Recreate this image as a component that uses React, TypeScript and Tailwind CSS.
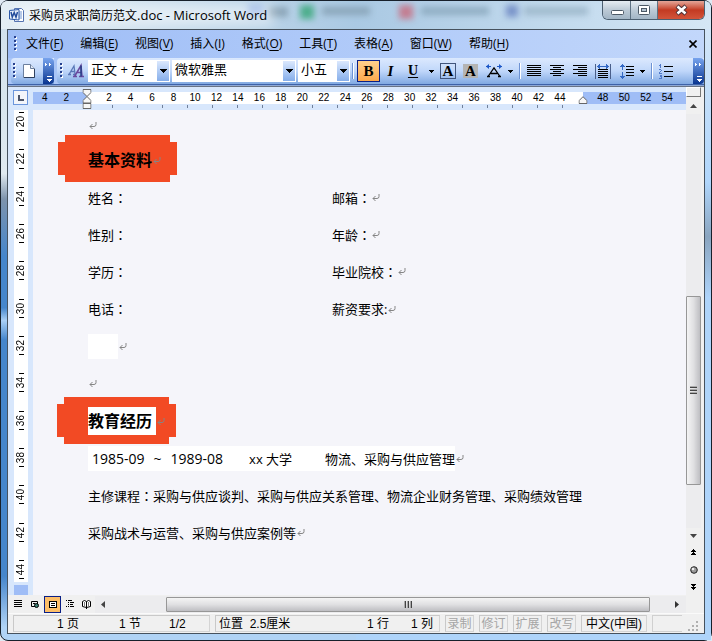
import type { ReactNode } from "react";

const uiFont = "font-['Open_Sans','Noto_Sans_CJK_SC',sans-serif]";

const menus = [
  ["文件", "F"],
  ["编辑", "E"],
  ["视图", "V"],
  ["插入", "I"],
  ["格式", "O"],
  ["工具", "T"],
  ["表格", "A"],
  ["窗口", "W"],
  ["帮助", "H"],
];

const rulerNumbers = Array.from({ length: 30 }, (_, i) => i * 2 - 4);
const verticalNumbers = Array.from({ length: 13 }, (_, i) => 20 + i * 2);

function Grip() {
  return (
    <svg className="h-4 w-[3px] shrink-0" viewBox="0 0 3 16" shapeRendering="crispEdges">
      {[0, 4, 8, 12].map((y) => (
        <g key={y}>
          <rect x="1" y={y + 1} width="2" height="2" fill="#fff" />
          <rect x="0" y={y} width="2" height="2" fill="#27418f" />
        </g>
      ))}
    </svg>
  );
}

function Overflow() {
  return (
    <button aria-label="工具栏选项" className="h-full w-[11px] shrink-0 rounded-r-sm bg-linear-to-b from-[#78a4ee] to-[#0a3590]">
      <svg className="h-full w-full" viewBox="0 0 11 26" shapeRendering="crispEdges">
        <path d="M2 5h1v1h1v1h-1v1h-1zM6 5h1v1h1v1h-1v1h-1z" fill="#fff" />
        <path d="M4 18h5v1h-5z" fill="#fff" />
        <path d="M4 21h5v1h-1v1h-1v1h-1v-1h-1v-1h-1z" fill="#fff" />
      </svg>
    </button>
  );
}

function Combo({ label, value, width }: { label: string; value: string; width: string }) {
  return (
    <label className={`relative block h-[22px] shrink-0 bg-white ${width}`}>
      <select aria-label={label} className="block h-full w-full appearance-none bg-white pr-4 pb-1 pl-[3px] text-[13px] leading-[18px] outline-none">
        <option>{value}</option>
      </select>
      <span className="pointer-events-none absolute inset-y-px right-px flex w-3 items-center justify-center bg-linear-to-b from-[#dbe8fd] to-[#86aeea]">
        <svg className="h-1 w-[7px]" viewBox="0 0 7 4" shapeRendering="crispEdges">
          <path d="M0 0h7v1h-1v1h-1v1h-1v1h-1v-1h-1v-1h-1v-1h-1z" />
        </svg>
      </span>
    </label>
  );
}

function Divider() {
  return <span className="h-4 w-0.5 shrink-0 border-r border-l border-r-white border-l-[#6d92d3]" />;
}

function DropArrow() {
  return (
    <button aria-label="更多" className="flex h-5 w-[6px] shrink-0 items-center justify-center">
      <svg className="h-[3px] w-[5px]" viewBox="0 0 5 3" shapeRendering="crispEdges">
        <path d="M0 0h5v1h-1v1h-1v1h-1v-1h-1v-1h-1z" />
      </svg>
    </button>
  );
}

function Lines({ label, rows }: { label: string; rows: [number, number][] }) {
  return (
    <button aria-label={label} className="h-[14px] w-[14px] shrink-0">
      <svg viewBox="0 0 14 14" className="h-full w-full" shapeRendering="crispEdges">
        {rows.map(([x, w], i) => (
          <rect key={i} x={x} y={1 + i * 2} width={w} height="1" />
        ))}
      </svg>
    </button>
  );
}

function ReturnMark() {
  return (
    <svg className="ml-px inline-block h-[7px] w-[8px] shrink-0" viewBox="0 0 8 7" fill="none" stroke="#858585" aria-hidden="true">
      <path d="M7 0v2.5q0 2-2 2H1" />
      <path d="M3.5 2 1 4.5 3.5 7" />
    </svg>
  );
}

function Colon() {
  return <span className="font-['Noto_Sans_CJK_TC',sans-serif]">：</span>;
}

function Row({ children, height = "h-[37px]" }: { children: ReactNode; height?: string }) {
  return <div className={`flex items-center whitespace-nowrap ${height}`}>{children}</div>;
}

function Banner({ children, edge }: { children: ReactNode; edge: string }) {
  return (
    <div className="relative flex h-[38px] items-center">
      <span className={`absolute h-[47px] w-[119px] ${edge}`}>
        <span className="absolute inset-x-[7px] inset-y-0 bg-[#f24a24]" />
        <span className="absolute inset-x-0 inset-y-[7px] bg-[#f24a24]" />
      </span>
      <h2 className="relative flex items-center text-[16px] leading-[28px] font-bold">{children}</h2>
    </div>
  );
}

function Field({ left, right, ascii }: { left: string; right: string; ascii?: boolean }) {
  return (
    <div className="grid h-[37px] grid-cols-[244px_1fr] items-center whitespace-nowrap">
      <span>
        {left}
        <Colon />
      </span>
      <span className="flex items-center">
        {right}
        {ascii ? ":" : <Colon />}
        <ReturnMark />
      </span>
    </div>
  );
}

function TitleBar() {
  return (
    <header className="relative flex h-[28px] shrink-0 items-center overflow-hidden rounded-t-md bg-linear-to-r from-[#e4eef4] via-[#aac9e3] to-[#d5e7f5]">
      <div className="absolute inset-0 blur-[3px]">
        <span className="absolute top-1 left-[247px] h-3 w-4 bg-[#86a9e0]" />
        <span className="absolute top-1.5 left-[267px] h-2.5 w-5 bg-[#8ba5b8]" />
        <span className="absolute top-1 left-[299px] h-3.5 w-3.5 bg-[#4eae8d]" />
        <span className="absolute top-1.5 left-[321px] h-2 w-12 bg-[#8aa6ba]" />
        <span className="absolute top-1 left-[398px] h-3.5 w-3.5 bg-[#c37e92]" />
        <span className="absolute top-1.5 left-[420px] h-2 w-17 bg-[#8fadc2]" />
        <span className="absolute top-1 left-[505px] h-3 w-3 bg-[#7993c9]" />
        <span className="absolute top-1.5 left-[523px] h-2 w-16 bg-[#9fb9cc]" />
      </div>
      <div className="absolute top-1 left-4 h-5 w-64 bg-white/50 blur-[6px]" />
      <svg className="relative ml-[8px] h-4 w-4" viewBox="0 0 16 16">
        <path d="M5.500 1.500h7l2 2v11h-9z" fill="#fff" stroke="#5573b0" />
        <path d="M9 5h4M10 7h3M10 9h3M9 11h4" stroke="#6f93d0" />
        <path d="M.5 3.500 10 2.500v10.500L.5 12z" fill="#e9f0fb" stroke="#2c58a8" />
        <path d="m2 5 1.300 5.200L5.200 5.500 7 10.200 8.500 5" fill="none" stroke="#234b9b" strokeWidth="1.500" />
      </svg>
      <h1 className="relative ml-1 text-[12px] leading-4 whitespace-nowrap">
        采购员求职简历范文<span className="text-[13px]">.doc - Microsoft Word</span>
      </h1>
      <div className="absolute top-0 right-[6px] flex h-[19px] overflow-hidden rounded-b-md border border-t-0 border-[#4c5f70]">
        <button aria-label="最小化" className="w-7 border-r border-[#5d7182] bg-linear-to-b from-[#e6edf3] via-[#bccad6] via-50% to-[#a2b5c5]">
          <svg viewBox="0 0 27 18" className="h-full w-full">
            <rect x="8.500" y="9.500" width="12" height="4" rx="1" fill="#fff" stroke="#4c5966" />
          </svg>
        </button>
        <button aria-label="还原" className="w-[27px] border-r border-[#5d7182] bg-linear-to-b from-[#e6edf3] via-[#bccad6] via-50% to-[#a2b5c5]">
          <svg viewBox="0 0 26 18" className="h-full w-full">
            <rect x="7.500" y="4.500" width="11" height="9" rx="1" fill="#fff" stroke="#4c5966" />
            <rect x="10.500" y="7.500" width="5" height="3" fill="#b5c4d1" stroke="#4c5966" />
          </svg>
        </button>
        <button aria-label="关闭" className="w-[46px] bg-linear-to-b from-[#e3a598] via-[#c33a22] via-50% to-[#d3543a]">
          <svg viewBox="0 0 46 18" className="h-full w-full">
            <path d="m19 5 9 8M28 5l-9 8" stroke="#513338" strokeWidth="4.500" />
            <path d="m19.500 5.500 8 7M27.500 5.500l-8 7" stroke="#fff" strokeWidth="2.500" />
          </svg>
        </button>
      </div>
    </header>
  );
}

function MenuBar() {
  return (
    <nav className="flex h-[28px] shrink-0 items-center bg-linear-to-r from-[#9ebdf6] to-[#c2d7fb] pl-[6px] text-[12px]">
      <Grip />
      <div className="ml-[9px] flex gap-[17px]">
        {menus.map(([name, key]) => (
          <button key={key} className="leading-4 whitespace-nowrap">
            {name}(<u className="underline-offset-2">{key}</u>)
          </button>
        ))}
      </div>
      <button aria-label="关闭文档" className="mr-[7px] ml-auto h-2 w-2">
        <svg viewBox="0 0 8 8" className="h-full w-full">
          <path d="m.5.5 7 7M7.500.5l-7 7" stroke="#000" strokeWidth="1.600" />
        </svg>
      </button>
    </nav>
  );
}

function Toolbars() {
  return (
    <div className="flex h-[26px] shrink-0 bg-[#a9c5f7] pl-[3px]">
      <div className="flex h-full items-center rounded-l-sm bg-linear-to-b from-[#dce9fe] via-[#c0d7fa] to-[#81a9e2] pl-[2px]">
        <Grip />
        <button aria-label="新建" className="mr-[7px] ml-[6px] h-[14px] w-[14px]">
          <svg viewBox="0 0 14 14" className="h-full w-full">
            <path d="M1.500.5h7l4 4v9h-11z" fill="#fff" stroke="#6b7f9f" />
            <path d="M8.500.5v4h4" fill="#dfe8f6" stroke="#6b7f9f" />
            <path d="M12.500 5v8.500H2" fill="none" stroke="#2f405e" />
          </svg>
        </button>
        <Overflow />
      </div>
      <div className="ml-[3px] flex h-full min-w-0 flex-1 items-center rounded-l-sm bg-linear-to-b from-[#dce9fe] via-[#c0d7fa] to-[#81a9e2] pl-[3px]">
        <Grip />
        <button aria-label="格式窗格" className="mr-1 ml-[5px] h-4 w-4 shrink-0">
          <svg viewBox="0 0 16 16" className="h-full w-full" fill="none">
            <path d="M0 11.500h3M5 11.500h3M1 11.500 6 3l1 8M3 8.500h3.500" stroke="#5a78b8" strokeWidth="1.300" />
            <path d="M5 13.500h4M11 13.500h5M6.500 13.500 13 2.500l1 11M9 9.500h4.500" stroke="#6a4a9f" strokeWidth="1.500" />
            <path d="M13 2.500v11" stroke="#253c86" strokeWidth="1.500" />
          </svg>
        </button>
        <Combo label="样式" value="正文 + 左" width="mr-[2px] w-[82px]" />
        <Combo label="字体" value="微软雅黑" width="mr-[2px] w-[124px]" />
        <Combo label="字号" value="小五" width="mr-[2px] w-[52px]" />
        <Divider />
        <button aria-pressed="true" className="ml-[3px] h-[22px] w-[23px] shrink-0 border border-[#0a1f86] bg-linear-to-b from-[#ffd08c] to-[#fdaa4c] font-['Liberation_Serif',serif] text-[15px] leading-5 font-bold">B</button>
        <button className="h-[22px] w-[21px] shrink-0 font-['Liberation_Serif',serif] text-[15px] leading-5 font-bold italic">I</button>
        <button className="h-[22px] w-6 shrink-0 font-['Liberation_Serif',serif] text-[14px] leading-5 font-bold underline underline-offset-2">U</button>
        <span className="ml-[3px]" />
        <DropArrow />
        <button className="ml-[6px] h-4 w-4 shrink-0 border border-[#41557c] font-['Liberation_Serif',serif] text-[15px] leading-[14px] font-bold">A</button>
        <button className="ml-[7px] h-[14px] w-[15px] shrink-0 bg-[#b4b4b4] font-['Liberation_Serif',serif] text-[15px] leading-[14px] font-bold">A</button>
        <button aria-label="字符缩放" className="ml-2 h-4 w-4 shrink-0">
          <svg viewBox="0 0 16 16" className="h-full w-full" fill="none">
            <path d="M0 3.500h5M11 3.500h5" stroke="#1c57c7" />
            <path d="m3 1-3 2.500L3 6zM13 1l3 2.500L13 6z" fill="#1c57c7" />
            <path d="M1 13.500h3M12 13.500h3M2 13.500 8 5l6 8.500M4.500 10.500h7" stroke="#000" strokeWidth="1.300" />
          </svg>
        </button>
        <span className="ml-[5px]" />
        <DropArrow />
        <span className="ml-[6px]" />
        <Divider />
        <div className="ml-[6px] flex shrink-0 gap-[9px]">
          <Lines label="两端对齐" rows={[[0, 14], [0, 14], [0, 14], [0, 14], [0, 14], [0, 14]]} />
          <Lines label="居中" rows={[[0, 14], [3, 8], [0, 14], [3, 8], [0, 14], [3, 8]]} />
          <Lines label="右对齐" rows={[[0, 14], [5, 9], [0, 14], [5, 9], [0, 14], [5, 9]]} />
        </div>
        <button aria-label="分散对齐" className="ml-2 h-4 w-4 shrink-0">
          <svg viewBox="0 0 16 16" className="h-full w-full" shapeRendering="crispEdges">
            <path d="M0 1h1v15H0zM15 1h1v15h-1z" fill="#4a5f8a" />
            <path d="M3 6h10v1H3zM3 8h10v1H3zM3 10h10v1H3zM3 12h10v1H3zM3 14h10v1H3z" />
            <path d="M2 3h12v1H2zM3 2h2v3H3zM11 2h2v3h-2zM4 1h1v5H4zM11 1h1v5h-1z" fill="#3469c4" />
          </svg>
        </button>
        <button aria-label="行距" className="ml-2 h-4 w-4 shrink-0">
          <svg viewBox="0 0 16 16" className="h-full w-full" shapeRendering="crispEdges">
            <path d="M3 1h1v1h1v1h1v1H4v3H3V4H1V3h1V2h1zM3 9h1v4h2v1H5v1H4v1H3v-1H2v-1H1v-1h2z" fill="#3469c4" />
            <path d="M7 3h8v1H7zM7 6h8v1H7zM7 9h8v1H7zM7 12h8v1H7z" />
          </svg>
        </button>
        <span className="ml-[4px]" />
        <DropArrow />
        <span className="ml-[6px]" />
        <Divider />
        <button aria-label="编号" className="ml-[6px] h-4 w-[14px] shrink-0">
          <svg viewBox="0 0 14 16" className="h-full w-full" shapeRendering="crispEdges">
            <path d="M1 1h1v4H1zM0 2h1v1H0zM0 6h2v1h1v1H2v1H1v1h2v1H0V9h1V8h1V7H0zM0 12h3v4H0v-1h2v-1H1v-1h1z" fill="#5079c9" />
            <path d="M5 3h9v1H5zM5 8h9v1H5zM5 13h9v1H5z" />
          </svg>
        </button>
        <div className="ml-auto h-full">
          <Overflow />
        </div>
      </div>
    </div>
  );
}

function HorizontalRuler() {
  return (
    <div className="flex h-[23px] shrink-0 bg-[#d8e7fc] pt-[3px]">
      <button aria-label="左对齐制表符" className="mr-[5px] ml-[5px] h-[15px] w-[15px] shrink-0 border border-[#6c96dc] bg-[#f3f5fa]">
        <svg viewBox="0 0 13 13" className="h-full w-full" shapeRendering="crispEdges">
          <path d="M4 4h2v4h4v2H4z" fill="#4c5468" />
        </svg>
      </button>
      <div className="relative mt-[2px] min-w-0 flex-1">
        <div className="h-3 bg-[linear-gradient(90deg,#9fbdf6_8.300%,#fff_8.300%,#fff_84.200%,#9fbdf6_84.200%)] pr-2 pl-px">
          <div className="grid grid-cols-[repeat(30,minmax(0,1fr))] text-center font-['Liberation_Sans',sans-serif] text-[10px] leading-3">
            {rulerNumbers.map((n) => (
              <span key={n}>{n === 0 || n === 46 ? "" : Math.abs(n)}</span>
            ))}
          </div>
        </div>
        <div className="flex pt-px pl-[55px]">
          {Array.from({ length: 19 }, (_, i) => (
            <span key={i} className="h-[3px] w-[25px] shrink border-r border-[#6f7f99]" />
          ))}
        </div>
        <svg className="absolute -top-[3px] left-[8.300%] h-[21px] w-[9px] -translate-x-1/2" viewBox="0 0 9 21" fill="#f7f7f7" stroke="#666">
          <path d="M.5.5h8v3l-4 4-4-4z" />
          <path d="m4.500 7.500 4 4v2.500h-8v-2.500z" />
          <path d="M.5 14.500h8v5h-8z" />
        </svg>
        <svg className="absolute top-[4px] left-[84.200%] h-2 w-[9px] -translate-x-1/2" viewBox="0 0 9 8" fill="#f7f7f7" stroke="#666">
          <path d="m4.500.7 4 4v2.800h-8V4.700z" />
        </svg>
      </div>
    </div>
  );
}

function VerticalRuler() {
  return (
    <div className="flex w-[25px] shrink-0 flex-col border-r-[5px] border-l-[6px] border-[#d8e7fc] bg-[#d8e7fc]">
      <div className="flex min-h-0 flex-1 flex-col overflow-hidden bg-white">
        <div className="-mt-[7px] -mb-[6px] flex min-h-0 flex-1 flex-col">
          {verticalNumbers.map((n) => (
            <div key={n} className="flex min-h-0 flex-1 flex-col items-center justify-center gap-[3px] font-['Liberation_Sans',sans-serif] text-[10px] leading-3">
              <span className="h-px w-[5px] shrink-0 bg-black" />
              <span className="rotate-180 [writing-mode:vertical-rl]">{n}</span>
              <span className="h-px w-[5px] shrink-0 bg-black" />
            </div>
          ))}
        </div>
      </div>
      <div className="mt-[3px] h-[10px] bg-[#9fbdf6]" />
    </div>
  );
}

function Page() {
  return (
    <article className="min-w-0 flex-1 overflow-hidden bg-[#f5f5fa] pl-[55px] text-[13px] leading-5 text-black">
      <div className="flex h-[31px] items-center pb-px">
        <ReturnMark />
      </div>
      <Banner edge="-top-[6px] -left-[30px]">
        基本资料
        <ReturnMark />
      </Banner>
      <Field left="姓名" right="邮箱" />
      <Field left="性别" right="年龄" />
      <Field left="学历" right="毕业院校" />
      <Row height="h-[38px]">
        <div className="w-full">
          <Field left="电话" right="薪资要求" ascii />
        </div>
      </Row>
      <Row>
        <span className="h-[25px] w-[30px] bg-white" />
        <ReturnMark />
      </Row>
      <Row>
        <ReturnMark />
      </Row>
      <Banner edge="-top-[5px] -left-[31px]">
        <span className="bg-white pr-1">教育经历</span>
        <ReturnMark />
      </Banner>
      <Row>
        <span className="flex h-[25px] items-center bg-white pl-1">
          <span className="text-[14px]">1985-09</span>
          <span className="ml-[9px] text-[14px]">~</span>
          <span className="ml-[9px] text-[14px]">1989-08</span>
          <span className="ml-[26px]">xx 大学</span>
          <span className="ml-[33px]">物流、采购与供应管理</span>
        </span>
        <ReturnMark />
      </Row>
      <Row>
        主修课程
        <Colon />
        采购与供应谈判、采购与供应关系管理、物流企业财务管理、采购绩效管理
      </Row>
      <Row>
        采购战术与运营、采购与供应案例等
        <ReturnMark />
      </Row>
    </article>
  );
}

function ViewBar() {
  return (
    <div className="flex h-[18px] shrink-0 items-center bg-[#f0f0f0]">
      <button aria-label="普通视图" className="ml-px flex h-4 w-[17px] items-center justify-center">
        <svg className="h-2 w-2" viewBox="0 0 8 8" shapeRendering="crispEdges">
          <path d="M0 0h8v1H0zM0 2h8v1H0zM0 4h8v1H0zM0 6h8v1H0z" />
        </svg>
      </button>
      <button aria-label="Web 版式视图" className="mr-px flex h-4 w-[17px] items-center justify-center">
        <svg className="h-2 w-2" viewBox="0 0 8 8">
          <path d="M4 6.500H.5v-5h6V4M2 3.500h2" fill="none" stroke="#000" />
          <circle cx="5.500" cy="5.500" r="2" fill="#3d7f72" stroke="#000" />
        </svg>
      </button>
      <button aria-label="页面视图" aria-pressed="true" className="flex h-[17px] w-[17px] items-center justify-center border border-[#0a1f86] bg-[#fdbf69]">
        <svg className="h-[7px] w-2" viewBox="0 0 8 7" shapeRendering="crispEdges">
          <path d="M0 0h8v7H0z" />
          <path d="M1 1h6v5H1z" fill="#fff" />
          <path d="M2 2h4v1H2zM2 4h4v1H2z" />
        </svg>
      </button>
      <button aria-label="大纲视图" className="flex h-4 w-[17px] items-center justify-center">
        <svg className="h-2 w-2" viewBox="0 0 8 8" shapeRendering="crispEdges">
          <path d="M0 0h1v1H0zM2 0h4v1H2zM2 2h1v1H2zM4 2h4v1H4zM2 4h1v1H2zM4 4h3v1H4zM0 6h1v1H0zM2 6h1v1H2zM4 6h4v1H4z" />
        </svg>
      </button>
      <button aria-label="阅读版式" className="flex h-4 w-[17px] items-center justify-center">
        <svg className="h-[9px] w-[9px]" viewBox="0 0 9 9" fill="#fff" stroke="#000">
          <path d="M.5 1.500 2.500.5l2 1 2-1 2 1v5l-4 1-4-1zM4.500 1.500V9M2 3h1M2 5h1M6 3h1M6 5h1" />
        </svg>
      </button>
      <div className="flex h-[17px] min-w-0 flex-1 items-center bg-[#ececee]">
        <button aria-label="向左滚动" className="flex h-4 w-4 items-center justify-center">
          <svg className="h-[7px] w-1" viewBox="0 0 4 7">
            <path d="M4 0v7L0 3.500z" fill="#444" />
          </svg>
        </button>
        <div className="ml-[55px] flex h-[15px] min-w-0 flex-1 items-center justify-center gap-px rounded-[1px] border border-[#979797] bg-linear-to-b from-[#f4f4f4] via-[#e0e0e2] to-[#bebec2]">
          <span className="h-[7px] w-0.5 border-r border-[#444] bg-[#aaa]" />
          <span className="h-[7px] w-0.5 border-r border-[#444] bg-[#aaa]" />
          <span className="h-[7px] w-0.5 border-r border-[#444] bg-[#aaa]" />
        </div>
        <button aria-label="向右滚动" className="ml-[19px] mr-px flex h-4 w-4 items-center justify-center">
          <svg className="h-[7px] w-1" viewBox="0 0 4 7">
            <path d="M0 0v7l4-3.500z" fill="#333" />
          </svg>
        </button>
      </div>
    </div>
  );
}

function VerticalScroll() {
  return (
    <div className="flex w-[18px] shrink-0 flex-col items-center bg-[#f0f0f0] pr-[3px]">
      <div className="h-[10px] w-[15px] border border-t-white border-r-[#777] border-b-[#777] border-l-white bg-[#f0f0f0]" />
      <button aria-label="向上滚动" className="flex h-[17px] w-full items-center justify-center">
        <svg className="h-1 w-[7px]" viewBox="0 0 7 4">
          <path d="M0 4h7L3.500 0z" fill="#444" />
        </svg>
      </button>
      <div className="flex min-h-0 w-full flex-1 flex-col bg-[#ececee]">
        <div className="flex-[182]" />
        <div className="flex w-[15px] flex-[188] flex-col items-center justify-center gap-px rounded-[1px] border border-[#979797] bg-linear-to-r from-[#f4f4f4] via-[#e0e0e2] to-[#bebec2]">
          <span className="h-0.5 w-[7px] border-b border-[#444] bg-[#aaa]" />
          <span className="h-0.5 w-[7px] border-b border-[#444] bg-[#aaa]" />
          <span className="h-0.5 w-[7px] border-b border-[#444] bg-[#aaa]" />
        </div>
        <div className="flex-[43]" />
      </div>
      <button aria-label="向下滚动" className="flex h-4 w-full items-center justify-center">
        <svg className="h-1 w-[7px]" viewBox="0 0 7 4">
          <path d="M0 0h7L3.500 4z" fill="#444" />
        </svg>
      </button>
      <div className="mb-[18px] flex flex-col">
        <button aria-label="前一页" className="flex h-[17px] w-[15px] items-center justify-center">
          <svg className="h-[7px] w-[5px]" viewBox="0 0 5 7" shapeRendering="crispEdges">
            <path d="M2 0h1v1h1v1h1v1H0V2h1V1h1zM2 3h1v1h1v1h1v1H0V5h1V4h1z" />
          </svg>
        </button>
        <button aria-label="选择浏览对象" className="flex h-[17px] w-[15px] items-center justify-center">
          <svg className="h-2 w-2" viewBox="0 0 8 8">
            <circle cx="4" cy="4" r="3.300" fill="#999" stroke="#222" />
            <circle cx="3" cy="3" r="1.300" fill="#eee" />
          </svg>
        </button>
        <button aria-label="下一页" className="flex h-[17px] w-[15px] items-center justify-center">
          <svg className="h-[7px] w-[5px]" viewBox="0 0 5 7" shapeRendering="crispEdges">
            <path d="M0 1h5v1H4v1H3v1H2V3H1V2H0zM0 4h5v1H4v1H3v1H2V6H1V5H0z" />
          </svg>
        </button>
      </div>
    </div>
  );
}

function StatusBar() {
  const cell = "flex h-[17px] shrink-0 items-center border border-t-[#c9c9c9] border-r-[#d4d4d4] border-b-[#d4d4d4] border-l-[#c9c9c9]";
  return (
    <footer className="flex h-5 shrink-0 items-center border-t border-[#fafafa] bg-[#f0f0f0] pl-[5px] font-['Liberation_Sans','Noto_Sans_CJK_SC',sans-serif] text-[12px] leading-4 whitespace-nowrap">
      <div className={`${cell} w-[197px] pl-[43px]`}>
        <span className="w-[62px]">1 页</span>
        <span className="w-[50px]">1 节</span>
        <span>1/2</span>
      </div>
      <div className={`${cell} ml-[5px] w-[225px] pl-[3px]`}>
        <span className="w-[148px]">位置&nbsp; 2.5厘米</span>
        <span className="w-[44px]">1 行</span>
        <span>1 列</span>
      </div>
      <div className="ml-[5px] flex gap-[5px] text-[#a5a5a5]">
        {["录制", "修订", "扩展", "改写"].map((t) => (
          <div key={t} className={`${cell} w-[29px] justify-center`}>
            {t}
          </div>
        ))}
      </div>
      <div className={`${cell} ml-[5px] w-[66px] justify-center`}>中文(中国)</div>
      <div className="ml-[5px] h-[17px] flex-1 border border-r-0 border-[#d0d0d0]" />
      <svg className="mr-1 ml-1.5 h-3 w-3 self-end" viewBox="0 0 12 12" fill="#b0b0b0">
        <path d="M8 0h2v2H8zM8 4h2v2H8zM8 8h2v2H8zM4 4h2v2H4zM4 8h2v2H4zM0 8h2v2H0z" />
      </svg>
    </footer>
  );
}

export default function App() {
  return (
    <div className={`h-screen w-full bg-[#dfe9f3] text-black ${uiFont}`}>
      <div className="flex h-full flex-col rounded-lg border border-[#17202b] bg-[linear-gradient(180deg,#cfe0ec_0%,#dfe9f0_27%,#7d93ad_31%,#4586cc_40%,#4586cc_48%,#a9cff5_50%,#4586cc_53%,#4586cc_90%,#b0d3f5_98%)]">
        <TitleBar />
        <div className="flex min-h-0 flex-1 bg-[linear-gradient(180deg,#d2e5f8_0%,#b0d6fb_25%,#8aa5bf_34%,#aed4fa_44%,#aed4fa_100%)] bg-[length:50%_100%] bg-right bg-no-repeat pr-[6px] pb-[6px] pl-[6px]">
          <main className="flex min-w-0 flex-1 flex-col border border-[#46525e]">
            <MenuBar />
            <Toolbars />
            <div className="h-[3px] shrink-0 border-t border-b border-t-[#3e62a8] border-b-[#6a7485] bg-[#8fa9d6]" />
            <div className="flex min-h-0 flex-1">
              <div className="flex min-w-0 flex-1 flex-col">
                <HorizontalRuler />
                <div className="flex min-h-0 flex-1">
                  <VerticalRuler />
                  <Page />
                </div>
                <ViewBar />
              </div>
              <VerticalScroll />
            </div>
            <StatusBar />
          </main>
        </div>
      </div>
    </div>
  );
}
